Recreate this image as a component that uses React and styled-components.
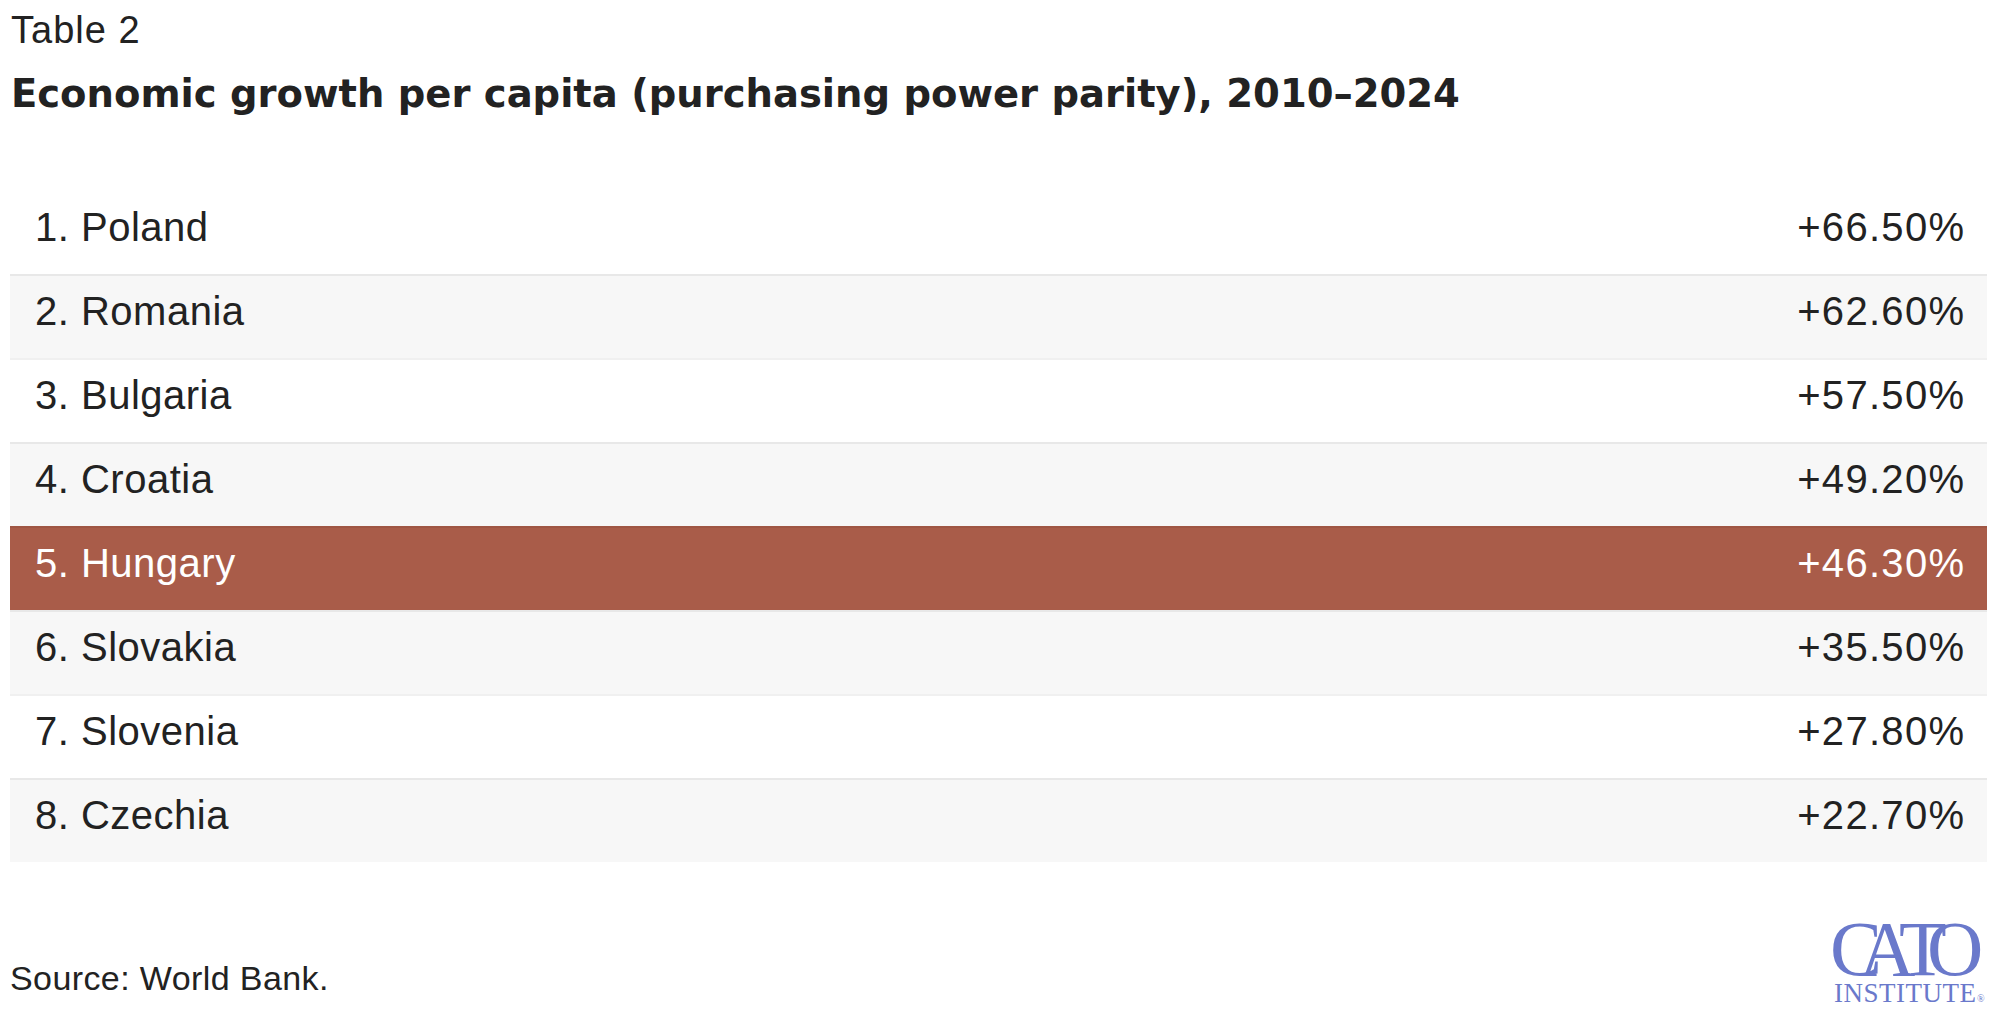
import React from "react";
import styled, { createGlobalStyle } from "styled-components";

const GlobalStyle = createGlobalStyle`
  html, body {
    margin: 0;
    padding: 0;
    background: #ffffff;
  }
  body {
    font-family: "Liberation Sans", Arial, sans-serif;
    color: #222222;
  }
`;

const Page = styled.div`
  padding: 8px 10px 0 10px;
  display: flex;
  flex-direction: column;
`;

const Caption = styled.div`
  font-family: "Liberation Sans", Arial, sans-serif;
  font-size: 38px;
  line-height: 44px;
  font-weight: 400;
  letter-spacing: 1px;
  color: #222222;
  padding-left: 1px;
`;

const Title = styled.h1`
  margin: 20px 0 0 0;
  font-family: "DejaVu Sans", "Liberation Sans", sans-serif;
  font-size: 38.5px;
  line-height: 44px;
  font-weight: 700;
  color: #222222;
  padding-left: 1px;
`;

const Table = styled.div`
  margin-top: 76px;
  display: flex;
  flex-direction: column;
`;

const Row = styled.div`
  display: flex;
  justify-content: space-between;
  align-items: center;
  padding: 13px 23px 24px 25px;
  font-size: 40px;
  line-height: 45px;
  color: ${(p) => (p.$highlight ? "#ffffff" : "#222222")};
  background: ${(p) =>
    p.$highlight ? "#a95c49" : p.$shaded ? "#f7f7f7" : "#ffffff"};

  & + & {
    border-top: 2px solid rgba(0, 0, 0, 0.06);
  }
`;

const Label = styled.span`
  letter-spacing: 0.5px;
`;

const Value = styled.span`
  letter-spacing: 1.3px;
  margin-right: -1.3px;
`;

const Footer = styled.div`
  margin-top: 42px;
  display: flex;
  justify-content: space-between;
  align-items: flex-end;
`;

const Source = styled.div`
  font-size: 34px;
  line-height: 39px;
  letter-spacing: 0.4px;
  margin-bottom: 16px;
  color: #222222;
`;

const LogoSvg = styled.svg`
  display: block;
  width: 160px;
  height: 110px;
  margin-right: 1px;
`;

const rows = [
  ["1. Poland", "+66.50%"],
  ["2. Romania", "+62.60%"],
  ["3. Bulgaria", "+57.50%"],
  ["4. Croatia", "+49.20%"],
  ["5. Hungary", "+46.30%"],
  ["6. Slovakia", "+35.50%"],
  ["7. Slovenia", "+27.80%"],
  ["8. Czechia", "+22.70%"],
];

function CatoLogo() {
  const blue = "#6a79cb";
  const serif = { fontFamily: "'Liberation Serif', 'Times New Roman', serif" };
  return (
    <LogoSvg viewBox="0 -12 160 110" aria-label="Cato Institute">
      <g fill={blue} style={serif}>
        <text x="4 33 73 101" y="59" fontSize="78">CATO</text>
        <text x="8" y="86" fontSize="27">
          <tspan textLength="142" lengthAdjust="spacing">INSTITUTE</tspan>
          <tspan x="151" fontSize="10">®</tspan>
        </text>
      </g>
    </LogoSvg>
  );
}

export default function App() {
  return (
    <>
      <GlobalStyle />
      <Page>
        <Caption>Table 2</Caption>
        <Title>Economic growth per capita (purchasing power parity), 2010–2024</Title>
        <Table>
          {rows.map(([label, value], i) => (
            <Row key={label} $shaded={i % 2 === 1} $highlight={i === 4}>
              <Label>{label}</Label>
              <Value>{value}</Value>
            </Row>
          ))}
        </Table>
        <Footer>
          <Source>Source: World Bank.</Source>
          <CatoLogo />
        </Footer>
      </Page>
    </>
  );
}
